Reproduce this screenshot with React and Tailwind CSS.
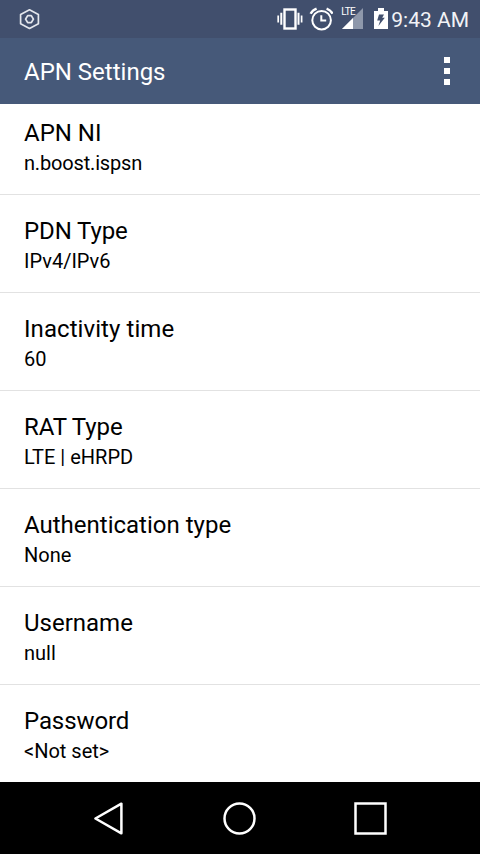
import React from 'react'

const settings = [
    { title: 'APN NI', value: 'n.boost.ispsn', valueClass: 'tracking-[-0.17px]' },
    { title: 'PDN Type', value: 'IPv4/IPv6', titleClass: 'tracking-[-0.1px]' },
    { title: 'Inactivity time', value: '60', titleClass: 'tracking-[0.07px]' },
    { title: 'RAT Type', value: 'LTE | eHRPD', titleClass: 'tracking-[-0.1px]' },
    { title: 'Authentication type', value: 'None' },
    { title: 'Username', value: 'null' },
    { title: 'Password', value: '<Not set>', titleClass: 'tracking-[-0.1px]' },
]

const HexIcon = () => (
    <svg className="block w-[22px] h-[22px]" viewBox="0 0 22 22" fill="none" stroke="#e3e6ec" strokeLinejoin="round">
        <path d="M11.5 1.8 L20.4 6.4 V15.8 L11.5 20.4 L2.6 15.8 V6.4 Z" strokeWidth="1.7" />
        <path d="M9.7 7.6 H13.3 L15.4 11.1 L13.3 14.6 H9.7 L7.6 11.1 Z" strokeWidth="1.8" />
    </svg>
)

const VibrateIcon = () => (
    <svg className="block w-[26px] h-[22px]" viewBox="0 0 26 22" fill="none" stroke="#fff" strokeWidth="2">
        <rect x="7.5" y="1.5" width="11" height="19" strokeWidth="2.4" />
        <path d="M4.3 4.8 V16.8 M21.5 4.8 V16.8" />
        <path d="M1.2 7.5 V14.5 M24.6 7.5 V14.5" strokeWidth="1.7" />
    </svg>
)

const AlarmIcon = () => (
    <svg className="block w-[24px] h-[24px]" viewBox="0 0 24 24" fill="none" stroke="#fff" strokeWidth="2">
        <circle cx="12.6" cy="13.2" r="9.3" />
        <path d="M12.3 8.2 V13.4 H17.2" />
        <path d="M1.6 6.8 Q3.4 3.2 7.6 1.6 M23.6 6.8 Q21.8 3.2 17.6 1.6" strokeWidth="2.4" />
    </svg>
)

const SignalIcon = () => (
    <svg className="block w-[24px] h-[22px]" viewBox="0 0 24 22">
        <path d="M23 0 V21 H2 Z" fill="#8e98ab" />
        <path d="M13 10 V21 H2 Z" fill="#fff" />
    </svg>
)

const BatteryIcon = () => (
    <svg className="block w-[14px] h-[22px]" viewBox="0 0 14 22">
        <path d="M4 0 H10 V3 H14 V21 H0 V3 H4 Z" fill="#fff" />
        <path d="M5 6.5 H10 L8.2 9.8 H10.8 L4.4 18 L6.2 12.6 H3.2 Z" fill="#414f6d" />
    </svg>
)

const StatusBar = () => (
    <div className="flex items-center h-[38px] pl-[18px] pr-[11px] bg-[#414f6d]">
        <HexIcon />
        <div className="flex items-center ml-auto">
            <VibrateIcon />
            <div className="ml-[6px]"><AlarmIcon /></div>
            <div className="relative ml-[7px]">
                <SignalIcon />
                <span className="absolute left-px -top-px text-[10px] leading-[10px] tracking-[-0.6px] text-white">LTE</span>
            </div>
            <div className="ml-[10px]"><BatteryIcon /></div>
            <span className="ml-[3px] pt-[2px] text-[21px] leading-[24px] text-[#f2f3f6]">9:43 AM</span>
        </div>
    </div>
)

const Header = () => (
    <header className="flex items-center justify-between h-[66px] pl-6 pr-[30px] bg-[#465979]">
        <h1 className="pt-[2px] text-2xl leading-[28px] text-white">APN Settings</h1>
        <button className="flex flex-col gap-[5px]" aria-label="More options">
            <span className="size-[6px] bg-white"></span>
            <span className="size-[6px] bg-white"></span>
            <span className="size-[6px] bg-white"></span>
        </button>
    </header>
)

const SettingRow = ({ title, value, titleClass = '', valueClass = '' }) => (
    <li className="flex flex-col shrink-0 h-[98px] pt-[22px] px-6 border-b border-[#e2e2e2] last:h-[97px] last:border-b-0">
        <span className={`text-2xl leading-[28px] text-black ${titleClass}`}>{title}</span>
        <span className={`mt-1 text-[20px] leading-[24px] text-black ${valueClass}`}>{value}</span>
    </li>
)

const NavBar = () => (
    <nav className="flex items-center justify-between h-[72px] px-[92px] bg-black">
        <svg className="block w-[34px] h-[36px]" viewBox="0 0 34 36" fill="none" stroke="#fff" strokeWidth="2.5" strokeLinejoin="round">
            <path d="M3.4 18.5 L29.4 3.7 V33.3 Z" />
        </svg>
        <svg className="block w-[36px] h-[36px]" viewBox="0 0 36 36" fill="none" stroke="#fff" strokeWidth="2.5">
            <circle cx="18.5" cy="18.5" r="15" />
        </svg>
        <svg className="block w-[36px] h-[36px]" viewBox="0 0 36 36" fill="none" stroke="#fff" strokeWidth="2.5">
            <rect x="3.5" y="3.5" width="30" height="30" />
        </svg>
    </nav>
)

const App = () => {
    return (
        <main className="flex flex-col w-[480px] h-[854px] overflow-hidden bg-white font-[Roboto,sans-serif]">
            <StatusBar />
            <Header />
            {/* the list is scrolled a little under the header */}
            <ul className="flex flex-col justify-end h-[678px] overflow-hidden">
                {settings.map((item) => (
                    <SettingRow key={item.title} {...item} />
                ))}
            </ul>
            <NavBar />
        </main>
    )
}

export default App
